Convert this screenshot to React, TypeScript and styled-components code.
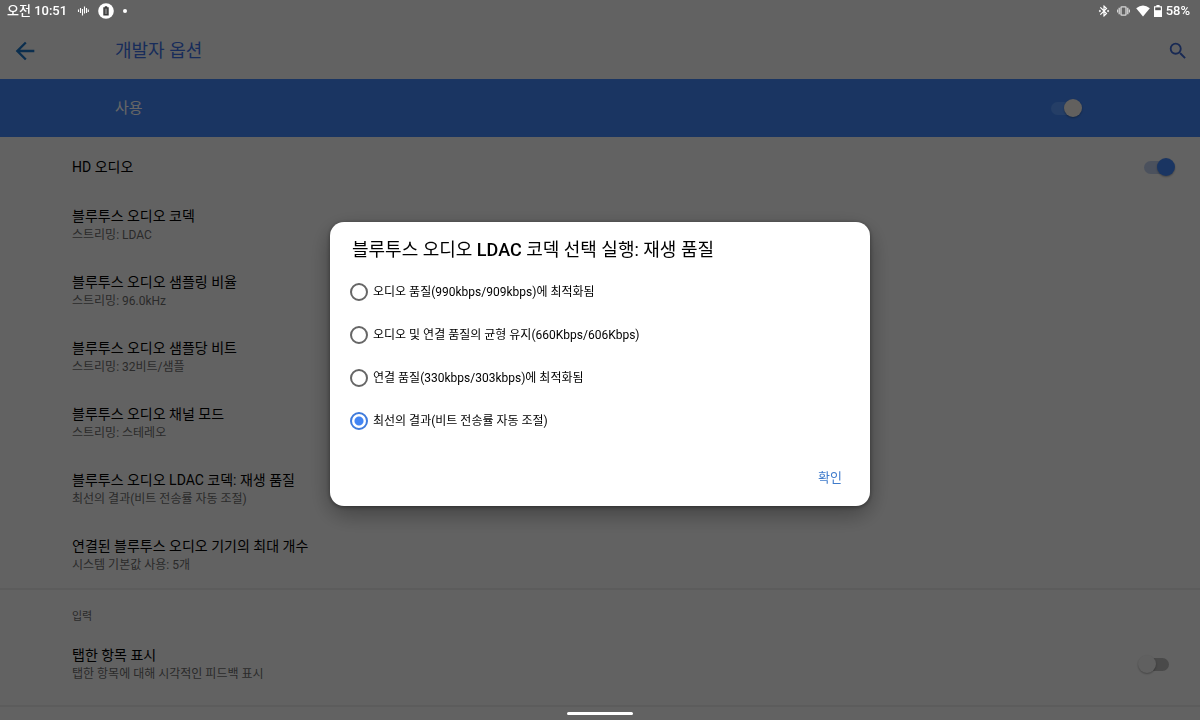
import React, { useState } from "react";
import styled, { createGlobalStyle } from "styled-components";
import { MdArrowBack, MdBluetoothConnected, MdSearch } from "react-icons/md";

const GlobalStyle = createGlobalStyle`
  *, *::before, *::after { box-sizing: border-box; }
  body {
    margin: 0;
    background: #f6f6f6;
    font-family: Roboto, "Noto Sans CJK KR", sans-serif;
    color: #000;
  }
  button, input { font: inherit; margin: 0; padding: 0; }
`;

const Screen = styled.div`
  min-height: 100vh;
  display: flex;
  flex-direction: column;
`;

const StatusBar = styled.header`
  position: fixed;
  inset: 0 0 auto 0;
  z-index: 3;
  height: 22px;
  padding: 0 10px 0 7px;
  display: flex;
  align-items: center;
  justify-content: space-between;
  color: #fff;
  font-size: 13px;
  font-weight: 500;
  line-height: 22px;
`;

const StatusGroup = styled.div<{ $gap: number }>`
  display: flex;
  align-items: center;
  gap: ${(p) => p.$gap}px;
`;

const AppBar = styled.div`
  height: 79px;
  padding: 22px 11px 0;
  display: flex;
  align-items: center;
`;

const IconButton = styled.button<{ $color: string }>`
  display: flex;
  border: 0;
  background: none;
  color: ${(p) => p.$color};
`;

const PageTitle = styled.h1`
  flex: 1;
  margin: 0 0 0 76px;
  font-size: 18px;
  line-height: 24px;
  font-weight: 400;
  color: #3c6fe0;
`;

const MasterRow = styled.label`
  height: 58px;
  padding: 0 118px 0 115px;
  display: flex;
  align-items: center;
  justify-content: space-between;
  background: #4285f4;
  color: #fff;
  font-size: 15px;
  line-height: 20px;
`;

const Toggle = styled.input<{ $thumb: string; $track: string }>`
  appearance: none;
  flex: none;
  width: 37px;
  height: 18px;
  display: grid;
  align-items: center;

  &::before, &::after { content: ""; grid-area: 1 / 1; }
  &::before {
    justify-self: center;
    width: 25px;
    height: 13px;
    border-radius: 7px;
    background: ${(p) => p.$track};
  }
  &::after {
    width: 18px;
    height: 18px;
    border-radius: 50%;
    background: ${(p) => p.$thumb};
    box-shadow: 0 1px 2px rgba(0, 0, 0, 0.3);
  }
  &:checked::after { justify-self: end; }
`;

const List = styled.section<{ $top: number; $bottom: number }>`
  padding: ${(p) => p.$top}px 0 ${(p) => p.$bottom}px;
  border-bottom: 2px solid #e6e6e6;
`;

const rowHeight = { single: 50, double: 66 };

const Row = styled.div<{ $kind: "single" | "double" }>`
  min-height: ${(p) => rowHeight[p.$kind]}px;
  padding: 0 25px 0 72px;
  display: flex;
  align-items: center;
  justify-content: space-between;
`;

const ToggleRow = styled(Row).attrs({ as: "label" })``;

const RowText = styled.div`
  display: flex;
  flex-direction: column;
`;

const RowTitle = styled.span`
  font-size: 14px;
  line-height: 20px;
`;

const RowSummary = styled.span`
  font-size: 12px;
  line-height: 18px;
  color: #6a6a6a;
`;

const SectionTitle = styled.h2`
  margin: 0;
  padding: 0 72px 6px;
  font-size: 11px;
  line-height: 16px;
  font-weight: 400;
  color: #6a6a6a;
`;

const Scrim = styled.div`
  position: fixed;
  inset: 0;
  z-index: 2;
  padding: 24px 16px 16px;
  display: flex;
  align-items: center;
  justify-content: center;
  background: rgba(0, 0, 0, 0.6);
`;

const Dialog = styled.form`
  width: 45vw;
  min-width: 340px;
  padding: 16px 20px 13px;
  border-radius: 14px;
  background: #fff;
  box-shadow: 0 8px 24px rgba(0, 0, 0, 0.35), 0 1px 4px rgba(0, 0, 0, 0.4);
`;

const DialogTitle = styled.h2`
  margin: 0 0 8px;
  padding-left: 2px;
  font-size: 18px;
  line-height: 24px;
  font-weight: 500;

  & > span { font-weight: 400; }
`;

const Options = styled.div`
  display: flex;
  flex-direction: column;
`;

const Option = styled.label`
  height: 43px;
  display: flex;
  align-items: center;
  gap: 5px;
  font-size: 12px;
  line-height: 18px;
`;

const Radio = styled.input`
  appearance: none;
  flex: none;
  width: 18px;
  height: 18px;
  border: 2px solid #666;
  border-radius: 50%;

  &:checked {
    border-color: #3f7bdc;
    background: radial-gradient(circle, #4285f4 4px, transparent 5px);
  }
`;

const Actions = styled.div`
  padding: 21px 2px 0;
  display: flex;
  justify-content: flex-end;
`;

const TextButton = styled.button`
  height: 30px;
  padding: 0 6px;
  border: 0;
  background: none;
  color: #3f7bcb;
  font-size: 13px;
  line-height: 20px;
`;

const HomeHandle = styled.div`
  position: fixed;
  bottom: 5px;
  left: 50%;
  z-index: 3;
  width: 66px;
  height: 3px;
  margin-left: -33px;
  border-radius: 2px;
  background: #fff;
`;

const audioRows = [
  ["블루투스 오디오 코덱", "스트리밍: LDAC"],
  ["블루투스 오디오 샘플링 비율", "스트리밍: 96.0kHz"],
  ["블루투스 오디오 샘플당 비트", "스트리밍: 32비트/샘플"],
  ["블루투스 오디오 채널 모드", "스트리밍: 스테레오"],
  ["블루투스 오디오 LDAC 코덱: 재생 품질", "최선의 결과(비트 전송률 자동 조절)"],
  ["연결된 블루투스 오디오 기기의 최대 개수", "시스템 기본값 사용: 5개"],
];

const options = [
  "오디오 품질(990kbps/909kbps)에 최적화됨",
  "오디오 및 연결 품질의 균형 유지(660Kbps/606Kbps)",
  "연결 품질(330kbps/303kbps)에 최적화됨",
  "최선의 결과(비트 전송률 자동 조절)",
];

const WaveIcon = () => (
  <svg width="12" height="12" viewBox="0 0 12 12" stroke="#fff" strokeWidth="1.1" aria-hidden="true">
    <path d="M1.5 4.5v2.5M3.5 3v5M5.5 4v6.5M7.5 1.5v7M9.5 3v5M11.3 4.5v2.5" />
  </svg>
);

const BatteryBadge = () => (
  <svg width="16" height="16" viewBox="0 0 16 16" aria-hidden="true">
    <circle cx="8" cy="8" r="7.8" fill="#fff" />
    <path d="M6.8 3.2h2.4v1h1.5v8.2H5.3V4.2h1.5z" fill="#3c3c3c" />
    <path d="M6.8 5.6h2.4v5.4H6.8z" fill="#777" />
  </svg>
);

const VibrateIcon = () => (
  <svg width="13" height="10" viewBox="0 0 13 10" fill="none" stroke="#d8d8d8" aria-hidden="true">
    <rect x="4" y="0.8" width="5" height="8.4" rx="0.8" strokeWidth="1.3" />
    <path d="M2.2 1.8v6.4M10.8 1.8v6.4" strokeWidth="1.3" />
    <path d="M0.6 3.4v3.2M12.4 3.4v3.2" strokeWidth="1.1" />
  </svg>
);

const WifiIcon = () => (
  <svg width="14" height="12" viewBox="0 0 14 12" aria-hidden="true">
    <path d="M0.2 3.2Q7-2.2 13.8 3.2L7 11.6z" fill="#fff" />
  </svg>
);

const BatteryIcon = () => (
  <svg width="8" height="12" viewBox="0 0 8 12" aria-hidden="true">
    <path d="M2.4 0h3.2v1.2H8V12H0V1.2h2.4z" fill="#fff" />
    <path d="M1.2 2.4h5.6v2.8H1.2z" fill="#555" />
  </svg>
);

const Dot = styled.span`
  width: 4px;
  height: 4px;
  border-radius: 50%;
  background: #fff;
`;

export default function App() {
  const [selected, setSelected] = useState(3);
  const [enabled, setEnabled] = useState(true);
  const [hdAudio, setHdAudio] = useState(true);
  const [showTaps, setShowTaps] = useState(false);

  return (
    <>
      <GlobalStyle />
      <StatusBar>
        <StatusGroup $gap={10}>
          <span>오전 10:51</span>
          <StatusGroup $gap={9}>
            <WaveIcon />
            <BatteryBadge />
            <Dot />
          </StatusGroup>
        </StatusGroup>
        <StatusGroup $gap={4}>
          <StatusGroup $gap={6}>
            <MdBluetoothConnected size={14} />
            <VibrateIcon />
            <WifiIcon />
          </StatusGroup>
          <BatteryIcon />
          <span>58%</span>
        </StatusGroup>
      </StatusBar>

      <Screen>
        <AppBar>
          <IconButton $color="#1c74c4" aria-label="뒤로">
            <MdArrowBack size={28} />
          </IconButton>
          <PageTitle>개발자 옵션</PageTitle>
          <IconButton $color="#3c66d0" aria-label="검색">
            <MdSearch size={22} />
          </IconButton>
        </AppBar>
        <MasterRow>
          사용
          <Toggle
            type="checkbox"
            $thumb="#f4f0ec"
            $track="#5c9cff"
            checked={enabled}
            onChange={() => setEnabled(!enabled)}
          />
        </MasterRow>
        <List $top={5} $bottom={0}>
          <ToggleRow $kind="single">
            <RowTitle>HD 오디오</RowTitle>
            <Toggle
              type="checkbox"
              $thumb="#4285f4"
              $track="#bccbe8"
              checked={hdAudio}
              onChange={() => setHdAudio(!hdAudio)}
            />
          </ToggleRow>
          {audioRows.map(([title, summary]) => (
            <Row $kind="double" key={title}>
              <RowText>
                <RowTitle>{title}</RowTitle>
                <RowSummary>{summary}</RowSummary>
              </RowText>
            </Row>
          ))}
        </List>
        <List $top={19} $bottom={8}>
          <SectionTitle>입력</SectionTitle>
          <ToggleRow $kind="double">
            <RowText>
              <RowTitle>탭한 항목 표시</RowTitle>
              <RowSummary>탭한 항목에 대해 시각적인 피드백 표시</RowSummary>
            </RowText>
            <Toggle
              type="checkbox"
              $thumb="#efefef"
              $track="#b8b8b8"
              checked={showTaps}
              onChange={() => setShowTaps(!showTaps)}
            />
          </ToggleRow>
        </List>
      </Screen>

      <Scrim>
        <Dialog role="dialog" aria-labelledby="dialog-title" onSubmit={(e) => e.preventDefault()}>
          <DialogTitle id="dialog-title">
            <span>블루투스 오디오 </span>LDAC<span> 코덱 선택 실행: 재생 품질</span>
          </DialogTitle>
          <Options>
            {options.map((label, i) => (
              <Option key={label}>
                <Radio type="radio" name="quality" checked={selected === i} onChange={() => setSelected(i)} />
                {label}
              </Option>
            ))}
          </Options>
          <Actions>
            <TextButton type="submit">확인</TextButton>
          </Actions>
        </Dialog>
      </Scrim>
      <HomeHandle />
    </>
  );
}
